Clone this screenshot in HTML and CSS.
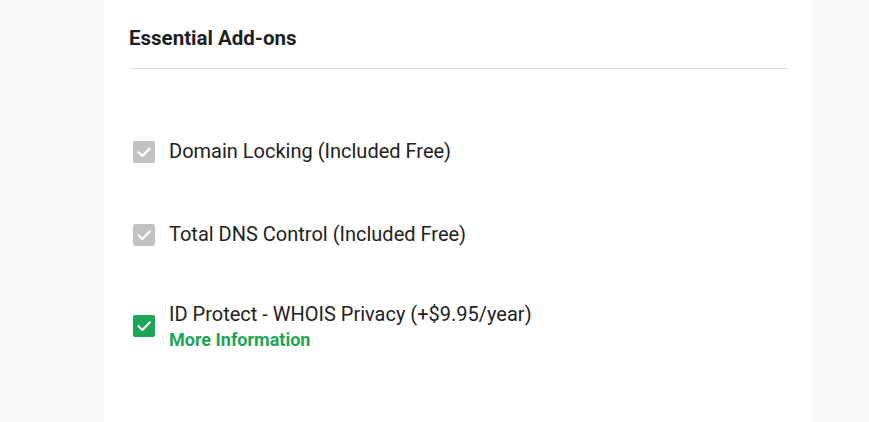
FILE: index.html
```html
<!DOCTYPE html>
<html>
<head>
<meta charset="utf-8">
<link rel="stylesheet" href="styles.css">
</head>
<body>
<div class="page">
  <div class="card">
    <h2 class="title">Essential Add-ons</h2>
    <div class="list">
      <label class="item first">
        <span class="box disabled"><svg viewBox="0 0 22 22" width="22" height="22"><path d="M5.5 11.2l3.8 3.8 7.4-7.6" fill="none" stroke="#fff" stroke-width="2.2" stroke-linecap="round" stroke-linejoin="round"/></svg></span>
        <span class="text"><span class="label">Domain Locking (Included Free)</span></span>
      </label>
      <label class="item second">
        <span class="box disabled"><svg viewBox="0 0 22 22" width="22" height="22"><path d="M5.5 11.2l3.8 3.8 7.4-7.6" fill="none" stroke="#fff" stroke-width="2.2" stroke-linecap="round" stroke-linejoin="round"/></svg></span>
        <span class="text"><span class="label">Total DNS Control (Included Free)</span></span>
      </label>
      <label class="item third">
        <span class="box checked"><svg viewBox="0 0 22 22" width="22" height="22"><path d="M5.5 11.2l3.8 3.8 7.4-7.6" fill="none" stroke="#fff" stroke-width="2.2" stroke-linecap="round" stroke-linejoin="round"/></svg></span>
        <span class="text"><span class="label">ID Protect - WHOIS Privacy (+$9.95/year)</span><a class="more" href="#">More Information</a></span>
      </label>
    </div>
  </div>
</div>
</body>
</html>
```
FILE: styles.css
```css
html, body {
  margin: 0;
  padding: 0;
  background: #f9f9f9;
  font-family: Roboto, "Liberation Sans", Arial, sans-serif;
  color: #222;
}
.page {
  padding-left: 104px;
  width: 708px;
}
.card {
  background: #fff;
  height: 422px;
  padding: 0 25px;
  box-sizing: border-box;
  overflow: hidden;
}
.title {
  margin: 0;
  padding: 26px 0 18px;
  font-size: 20.5px;
  font-weight: 700;
  line-height: 24px;
  color: #1f1f1f;
  border-bottom: 1px solid #dddddd;
}
.list {
  display: flex;
  flex-direction: column;
  padding: 72px 0 0 4px;
}
.item {
  display: flex;
  align-items: flex-start;
  gap: 14px;
}
.item.second { margin-top: 61px; }
.item.third { margin-top: 57px; }
.box {
  width: 22px;
  height: 22px;
  border-radius: 2px;
  flex: none;
  display: flex;
}
.item.first .label, .item.second .label { margin-top: -1px; }
.item.third .box { margin-top: 12px; }
.box.disabled { background: #c2c2c2; }
.box.checked { background: #1ba556; }
.text {
  display: flex;
  flex-direction: column;
}
.label {
  font-size: 20px;
  line-height: 22px;
  color: #222;
}
.more {
  font-size: 18px;
  font-weight: 700;
  line-height: 22px;
  color: #1ba556;
  text-decoration: none;
  margin-top: 4px;
}
```
